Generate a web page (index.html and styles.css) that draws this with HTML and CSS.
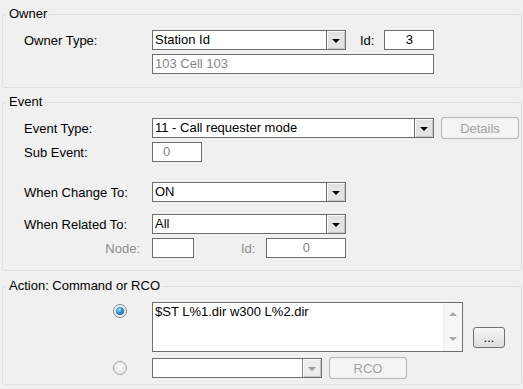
FILE: index.html
```html
<!DOCTYPE html>
<html lang="en">
  <head>
    <meta charset="UTF-8" />
    <title>Event Action</title>
    <link rel="stylesheet" href="styles.css">
  </head>

  <body>
    <fieldset class="group group-owner">
      <legend>Owner</legend>
      <div class="group-body">
        <div class="row">
          <span class="label">Owner Type:</span>
          <div class="combo combo-mid">
            <span class="combo-text">Station Id</span>
            <span class="combo-btn"><span class="arrow"></span></span>
          </div>
          <span class="inline-label id-owner">Id:</span>
          <div class="field field-id center">3</div>
        </div>
        <div class="row gap-4">
          <span class="label"></span>
          <div class="field field-wide disabled">103 Cell 103</div>
        </div>
      </div>
    </fieldset>

    <fieldset class="group group-event">
      <legend>Event</legend>
      <div class="group-body">
        <div class="row">
          <span class="label">Event Type:</span>
          <div class="combo combo-wide">
            <span class="combo-text">11 - Call requester mode</span>
            <span class="combo-btn"><span class="arrow"></span></span>
          </div>
          <button class="btn btn-details" disabled>Details</button>
        </div>
        <div class="row gap-4">
          <span class="label">Sub Event:</span>
          <div class="field field-small disabled pad-left">0</div>
        </div>
        <div class="row gap-20">
          <span class="label">When Change To:</span>
          <div class="combo combo-mid">
            <span class="combo-text">ON</span>
            <span class="combo-btn"><span class="arrow"></span></span>
          </div>
        </div>
        <div class="row gap-12">
          <span class="label">When Related To:</span>
          <div class="combo combo-mid">
            <span class="combo-text">All</span>
            <span class="combo-btn"><span class="arrow"></span></span>
          </div>
        </div>
        <div class="row gap-4">
          <span class="label label-right muted">Node:</span>
          <div class="field field-node"></div>
          <span class="inline-label id-node muted">Id:</span>
          <div class="field field-nodeid disabled center">0</div>
        </div>
      </div>
    </fieldset>

    <fieldset class="group group-action">
      <legend>Action: Command or RCO</legend>
      <div class="group-body">
        <div class="row row-command">
          <span class="radio-cell top"><span class="radio checked"><span class="dot"></span></span></span>
          <div class="memo">
            <div class="memo-text">$ST L%1.dir w300 L%2.dir</div>
            <div class="scrollbar">
              <span class="scroll-arrow up"></span>
              <span class="scroll-arrow down"></span>
            </div>
          </div>
          <button class="btn btn-more">...</button>
        </div>
        <div class="row gap-6">
          <span class="radio-cell"><span class="radio"></span></span>
          <div class="combo combo-rco is-disabled">
            <span class="combo-text"></span>
            <span class="combo-btn"><span class="arrow"></span></span>
          </div>
          <button class="btn btn-rco" disabled>RCO</button>
        </div>
      </div>
    </fieldset>
  </body>
</html>
```

FILE: styles.css
```css
body {
  font-family: "Liberation Sans", Arial, sans-serif;
  font-size: 13px;
  color: #000;
  background-color: #f0f0f0;
  margin: 0;
  padding: 6px 1px 0 2px;
}

/* Group boxes */
.group {
  border: 1px solid #d8e0e6;
  border-radius: 3px;
  margin: 0;
  padding: 8px 0 13px 0;
}

.group legend {
  margin-left: 4px;
  padding: 0 2px;
  line-height: 16px;
}

.group-body {
  padding-left: 21px;
}

.group-event {
  margin-top: 6px;
  padding-bottom: 12px;
}

.group-action {
  margin-top: 7px;
  padding-bottom: 6px;
}

/* Rows */
.row {
  display: flex;
  align-items: center;
  height: 20px;
}

.gap-4 {
  margin-top: 4px;
}

.gap-6 {
  margin-top: 6px;
}

.gap-12 {
  margin-top: 12px;
}

.gap-20 {
  margin-top: 20px;
}

.label {
  width: 128px;
  flex: none;
}

.label-right {
  width: 116px;
  margin-right: 12px;
  text-align: right;
}

.muted {
  color: #8d8d8d;
}

.inline-label {
  flex: none;
}

.id-owner {
  margin-left: 14px;
  margin-right: 10px;
}

.id-node {
  margin-left: 47px;
  margin-right: 11px;
}

/* Text fields */
.field {
  box-sizing: border-box;
  height: 20px;
  border: 1px solid #6e6e6e;
  background-color: #fff;
  padding: 0 2px;
  line-height: 18px;
  white-space: nowrap;
}

.field.disabled {
  color: #858585;
}

.center {
  text-align: center;
}

.pad-left {
  padding-left: 10px;
}

.field-id {
  width: 50px;
}

.field-wide {
  width: 282px;
}

.field-small {
  width: 50px;
}

.field-node {
  width: 42px;
}

.field-nodeid {
  width: 80px;
}

/* Combo boxes */
.combo {
  box-sizing: border-box;
  height: 20px;
  display: flex;
  border: 1px solid #6e6e6e;
  background-color: #fff;
}

.combo-mid {
  width: 194px;
}

.combo-wide {
  width: 282px;
}

.combo-rco {
  width: 170px;
}

.combo-text {
  flex: 1;
  padding-left: 2px;
  line-height: 18px;
  white-space: nowrap;
}

.combo-btn {
  box-sizing: border-box;
  width: 19px;
  border-left: 1px solid #6e6e6e;
  background-color: #e3e3e3;
  box-shadow: inset 1px 1px 0 #fafafa, inset -1px -1px 0 #c8c8c8;
  display: flex;
  align-items: center;
  justify-content: center;
}

.arrow {
  width: 0;
  height: 0;
  border-left: 4px solid transparent;
  border-right: 4px solid transparent;
  border-top: 4px solid #000;
  margin-top: 1px;
}

.is-disabled .combo-btn {
  background-color: #ececec;
  border-left-color: #8a8a8a;
}

.is-disabled .arrow {
  border-top-color: #9a9a9a;
}

/* Buttons */
.btn {
  box-sizing: border-box;
  font-family: inherit;
  font-size: 13px;
  border: 1px solid #707070;
  border-radius: 3px;
  background: linear-gradient(#f6f6f6, #dedede);
  color: #000;
  padding: 0;
  flex: none;
}

.btn:disabled {
  border-color: #b6b6b6;
  background: #f4f4f4;
  color: #a0a0a0;
}

.btn-details {
  width: 78px;
  height: 22px;
  margin-left: 7px;
}

.btn-rco {
  width: 78px;
  height: 22px;
  margin-left: 7px;
}

.btn-more {
  width: 32px;
  height: 21px;
  margin-left: 10px;
  align-self: flex-end;
  margin-bottom: 4px;
  line-height: 14px;
}

/* Radio buttons */
.radio-cell {
  width: 103px;
  margin-right: 25px;
  flex: none;
  display: flex;
  justify-content: flex-end;
}

.radio-cell.top {
  align-self: flex-start;
  margin-top: 2px;
}

.radio {
  box-sizing: border-box;
  width: 14px;
  height: 14px;
  border: 1px solid #a0a0a0;
  border-radius: 50%;
  background: radial-gradient(circle at 45% 40%, #ffffff, #dcdcdc);
  display: flex;
  align-items: center;
  justify-content: center;
}

.radio.checked {
  border-color: #7d8a93;
}

.dot {
  width: 8px;
  height: 8px;
  border-radius: 50%;
  background: radial-gradient(circle at 40% 35%, #a6e4ff 0, #2a8fd0 45%, #0b4f86 100%);
}

/* Command memo */
.row-command {
  height: 50px;
  align-items: stretch;
}

.memo {
  box-sizing: border-box;
  width: 311px;
  display: flex;
  border: 1px solid #6e6e6e;
  background-color: #fff;
}

.memo-text {
  flex: 1;
  padding: 1px 2px;
  line-height: 16px;
}

.scrollbar {
  width: 18px;
  background-color: #f7f7f7;
  border-left: 1px solid #ededed;
  display: flex;
  flex-direction: column;
  justify-content: space-between;
  align-items: center;
  padding: 9px 0 10px;
}

.scroll-arrow {
  width: 0;
  height: 0;
  border-left: 4px solid transparent;
  border-right: 4px solid transparent;
}

.scroll-arrow.up {
  border-bottom: 4px solid #a8a8a8;
}

.scroll-arrow.down {
  border-top: 4px solid #a8a8a8;
}
```
